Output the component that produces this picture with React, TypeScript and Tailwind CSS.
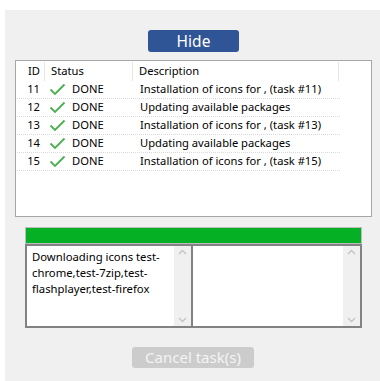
const rows = [
	{ id: 11, desc: 'Installation of icons for , (task #11)' },
	{ id: 12, desc: 'Updating available packages' },
	{ id: 13, desc: 'Installation of icons for , (task #13)' },
	{ id: 14, desc: 'Updating available packages' },
	{ id: 15, desc: 'Installation of icons for , (task #15)' },
];

const Check = () => (
	<svg width="17" height="13" viewBox="0 0 17 13" fill="none">
		<path d="M1.5 6.5 L6 11 L15.5 1.5" stroke="#4caf50" strokeWidth="1.8" />
	</svg>
);

const ScrollBar = () => (
	<div className="flex flex-col justify-between items-center w-[17px] h-full bg-[#f0f0f0] py-[3px]">
		<svg width="9" height="6" viewBox="0 0 9 6">
			<path d="M1 5 L4.5 1.5 L8 5" stroke="#c4c4c4" strokeWidth="1.4" fill="none" />
		</svg>
		<svg width="9" height="6" viewBox="0 0 9 6">
			<path d="M1 1 L4.5 4.5 L8 1" stroke="#c4c4c4" strokeWidth="1.4" fill="none" />
		</svg>
	</div>
);

export default function App() {
	return (
		<div
			className="w-[380px] h-[381px] bg-white pt-[10px] pl-[5px] overflow-hidden"
			style={{ fontFamily: '"Noto Sans", "Open Sans", sans-serif' }}>
			<div className="bg-[#f0f0f0] w-[375px] h-[371px] flex flex-col">
				{/* hide */}
				<button className="mt-[20px] ml-[143px] w-[91px] h-[22px] rounded-[3px] bg-[#2f5597] text-white text-[15.5px] leading-[22px]">
					Hide
				</button>

				{/* task list */}
				<div className="mt-[8px] ml-[10px] w-[357px] h-[157px] bg-white border border-[#a6a6a6] pt-[1px] pl-[1px] text-[11.2px] text-black">
					<div className="flex h-[19px] items-center">
						<div className="w-[27px] text-right pr-[4px]">ID</div>
						<div className="w-[88px] h-full border-l border-[#e5e5e5] pl-[6px] flex items-center">Status</div>
						<div className="w-[207px] h-full border-l border-r border-[#e5e5e5] pl-[6px] flex items-center">Description</div>
					</div>
					{rows.map((r) => (
						<div key={r.id} className="flex h-[18px] items-center w-[323px] border-b border-dotted border-[#d9d9d9]">
							<div className="w-[27px] text-right pr-[4px]">{r.id}</div>
							<div className="w-[88px] flex items-center gap-[6px] pl-[5px]">
								<Check />
								<span>DONE</span>
							</div>
							<div className="pl-[8px] whitespace-nowrap">{r.desc}</div>
						</div>
					))}
				</div>

				{/* progress */}
				<div className="mt-[10px] ml-[20px] w-[337px]">
					<div className="h-[17px] border border-[#bcbcbc] bg-[#06b025]" />
					<div className="flex h-[84px]">
						<div className="flex w-[167px] h-full border-2 border-[#828282] border-r bg-white">
							<div className="flex-1 pl-[5px] pt-[3px] text-[11.3px] leading-[16px] text-black">
								Downloading icons test-
								<br />
								chrome,test-7zip,test-
								<br />
								flashplayer,test-firefox
							</div>
							<ScrollBar />
						</div>
						<div className="flex flex-1 h-full border-2 border-[#828282] border-l bg-white">
							<div className="flex-1" />
							<ScrollBar />
						</div>
					</div>
				</div>

				{/* cancel */}
				<button className="mt-[19px] ml-[127px] w-[122px] h-[21px] rounded-[3px] bg-[#cccccc] text-[#f4f4f4] text-[15px] leading-[21px]">
					Cancel task(s)
				</button>
			</div>
		</div>
	);
}
